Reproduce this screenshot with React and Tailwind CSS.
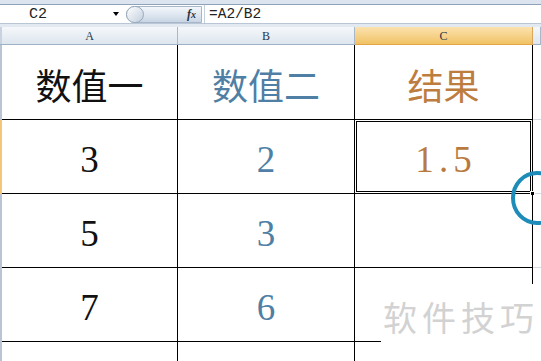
const serif = "font-['Liberation_Serif','Noto_Sans_CJK_SC',serif]";
const cjk = "font-['Noto_Sans_CJK_SC','Liberation_Sans',sans-serif]";

const ROWS = [
  { h: 'h-[75px]', a: '数值一', b: '数值二', c: '结果', head: true },
  { h: 'h-[74px]', a: '3', b: '2', c: '1.5', selected: true },
  { h: 'h-[74px]', a: '5', b: '3', c: '' },
  { h: 'h-[74px]', a: '7', b: '6', c: '' },
];

function Cell({ w, children, color, head }) {
  return (
    <div className={`relative ${w} shrink-0 flex items-center justify-center border-b border-r border-black`}>
      <span className={`${head ? cjk + ' text-[36px] pt-[4px]' : serif + ' text-[37px] pt-[6px]'} leading-none ${color}`}>
        {children}
      </span>
    </div>
  );
}

function FormulaBar() {
  return (
    <div>
      <div className="h-[4px] bg-[#dbe4ef]" />
      <div className="h-[20px] flex items-center bg-white border-t border-[#8fa3b8] border-b border-b-[#b9c6d5]">
        <div className="w-[122px] flex items-center">
          <span className="pl-[29px] font-['Liberation_Mono',monospace] text-[15px] text-[#222] leading-none">C2</span>
          <span className="ml-auto mr-[3px] w-0 h-0 border-l-[3px] border-r-[3px] border-t-[4px] border-l-transparent border-r-transparent border-t-black" />
        </div>
        <div className="ml-[4px] w-[76px] h-[17px] relative flex items-center rounded-l-full bg-gradient-to-b from-[#f4f7fb] via-[#dfe7f1] to-[#c8d5e4] border border-[#a7b6c9]">
          <div className="absolute left-[-1px] top-[-1px] w-[18px] h-[17px] rounded-full bg-gradient-to-br from-white to-[#c3cfdd] border border-[#98a9be]" />
          <span className="ml-auto mr-[5px] font-['Liberation_Serif',serif] italic font-bold text-[12px] text-[#2c3440] leading-none">
            f<span className="text-[10px]">x</span>
          </span>
        </div>
        <div className="ml-[2px] w-px h-[18px] bg-[#c5d0dd]" />
        <span className="ml-[4px] font-['Liberation_Mono',monospace] text-[14.5px] text-[#222] leading-none">=A2/B2</span>
      </div>
      <div className="h-[3px] bg-[#e3e9f1]" />
    </div>
  );
}

function HeaderRow() {
  const hdr = "h-[18px] shrink-0 flex items-center justify-center font-['Liberation_Serif',serif] text-[12px] text-[#27364a] border-r border-[#a9b7c8] border-b border-b-[#9eb0c5]";
  return (
    <div className="flex">
      <div className="w-[2px] h-[18px] bg-[#c9d3df] border-b border-[#9eb0c5]" />
      <div className={`${hdr} w-[176px] bg-gradient-to-b from-[#f5f8fb] to-[#dde5ee]`}>A</div>
      <div className={`${hdr} w-[177px] bg-gradient-to-b from-[#f5f8fb] to-[#dde5ee]`}>B</div>
      <div className={`${hdr} w-[178px] bg-gradient-to-b from-[#fbe3ae] to-[#f1c263] border-b-[#e2a646] border-r-[#d9a65a]`}>C</div>
      <div className={`${hdr} flex-1 bg-gradient-to-b from-[#f5f8fb] to-[#dde5ee]`} />
    </div>
  );
}

export default function App() {
  return (
    <div className="relative w-[541px] h-[361px] overflow-hidden bg-white">
      <FormulaBar />
      <HeaderRow />

      {ROWS.map((r, i) => (
        <div key={i} className={`flex ${r.h}`}>
          <div className={`w-[2px] shrink-0 ${r.selected ? 'bg-[#f3c679]' : 'bg-[#b9c5d4]'}`} />
          <Cell w="w-[176px]" head={r.head} color="text-[#111]">{r.a}</Cell>
          <Cell w="w-[177px]" head={r.head} color="text-[#4f7fa5]">{r.b}</Cell>
          <div className="relative w-[178px] shrink-0 flex items-center justify-center border-r border-b border-black">
            {r.head ? (
              <span className={`${cjk} text-[36px] leading-none pt-[4px] text-[#bd7d3f]`}>{r.c}</span>
            ) : r.c ? (
              <span className={`${serif} text-[37px] leading-none pt-[6px] text-[#b97a40] flex`}>
                {r.c.split('').map((ch, k) => (
                  <span key={k} className="w-[19px] text-center">{ch}</span>
                ))}
              </span>
            ) : null}
            {r.selected && (
              <>
                <div className="absolute -top-px -left-px right-[-1px] bottom-[-1px] border-[3px] border-double border-black" />
                <div className="absolute right-[-3px] bottom-[-3px] w-[5px] h-[5px] bg-black border border-white" />
              </>
            )}
          </div>
          <div className="flex-1 border-b border-[#d4dbe5]" />
        </div>
      ))}

      <div className="flex h-[20px]">
        <div className="w-[2px] shrink-0 bg-[#b9c5d4]" />
        <div className="w-[176px] shrink-0 border-r border-black" />
        <div className="w-[177px] shrink-0 border-r border-black" />
        <div className="w-[178px] shrink-0 border-r border-black" />
      </div>

      {/* watermark */}
      <div className="absolute left-[381px] top-[284px] w-[160px] h-[77px] bg-white">
        <div className={`${cjk} mt-[16px] ml-[2px] text-[34px] leading-none tracking-[5px] whitespace-nowrap text-[#d2d2d2]`}>软件技巧</div>
      </div>

      {/* annotation circle */}
      <svg className="absolute left-[500px] top-[160px]" width="41" height="80" viewBox="0 0 41 80">
        <ellipse cx="37" cy="38" rx="24" ry="25" fill="none" stroke="#1d8cb9" strokeWidth="4" />
      </svg>
    </div>
  );
}
